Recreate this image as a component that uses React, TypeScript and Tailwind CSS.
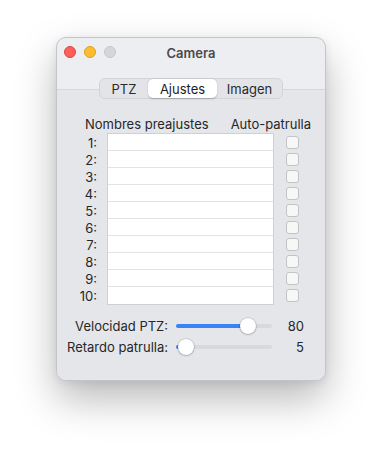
const presets = Array.from({ length: 10 }, (_, i) => i + 1);

function TrafficLights() {
  return (
    <div className="absolute left-[7px] top-[8px] flex gap-[8px]">
      <span className="h-[12px] w-[12px] rounded-full border border-[#e0443e] bg-[#fe5f57]" />
      <span className="h-[12px] w-[12px] rounded-full border border-[#dea123] bg-[#febc2e]" />
      <span className="h-[12px] w-[12px] rounded-full border border-[#c6c6c9] bg-[#d5d6d9]" />
    </div>
  );
}

function Tabs() {
  const tabs = ["PTZ", "Ajustes", "Imagen"];
  const widths = ["w-[48px]", "w-[69px]", "w-[65px]"];
  return (
    <div className="relative z-10 mx-auto flex h-[21px] items-center rounded-[6px] border border-[#d3d4d8] bg-[#e3e4e8] px-[0px]">
      {tabs.map((t, i) => (
        <div
          key={t}
          className={
            i === 1
              ? `${widths[i]} flex h-[19px] items-center justify-center rounded-[5px] bg-white text-[#1d1d1f] shadow-[0_0.5px_1.5px_rgba(0,0,0,0.25)]`
              : `${widths[i]} flex h-[19px] items-center justify-center text-[#2a2a2c]`
          }
        >
          {t}
        </div>
      ))}
    </div>
  );
}

function Slider({ label, value, pos }: { label: string; value: number; pos: "a" | "b" }) {
  return (
    <div className="flex h-[21px] items-center">
      <div className="w-[111px] text-right">{label}</div>
      <div className="relative ml-[8px] h-[16px] w-[96px]">
        <div className="absolute left-0 right-0 top-[6px] h-[4px] rounded-full bg-[#d8d9dd]" />
        <div
          className={
            pos === "a"
              ? "absolute left-0 top-[6px] h-[4px] w-[72px] rounded-full bg-[#3a82f7]"
              : "absolute left-0 top-[6px] h-[4px] w-[10px] rounded-full bg-[#3a82f7]"
          }
        />
        <div
          className={
            pos === "a"
              ? "absolute left-[64px] top-0 h-[16px] w-[16px] rounded-full bg-white shadow-[0_0.5px_2px_rgba(0,0,0,0.35),0_0_0_0.5px_rgba(0,0,0,0.12)]"
              : "absolute left-[2px] top-0 h-[16px] w-[16px] rounded-full bg-white shadow-[0_0.5px_2px_rgba(0,0,0,0.35),0_0_0_0.5px_rgba(0,0,0,0.12)]"
          }
        />
      </div>
      <div className="w-[32px] text-right">{value}</div>
    </div>
  );
}

export default function App() {
  return (
    <div className="min-h-[455px] bg-white pl-[56px] pt-[37px] font-['Inter','Liberation_Sans',sans-serif] text-[13px] leading-[16px] text-[#262628]">
      <div className="flex h-[344px] w-[270px] flex-col overflow-hidden rounded-[10px] border border-[#c4c5c9] bg-[#eceef1] shadow-[0_18px_40px_rgba(0,0,0,0.28),0_2px_8px_rgba(0,0,0,0.08)]">
        <div className="relative flex h-[29px] shrink-0 items-center justify-center">
          <TrafficLights />
          <span className="font-semibold text-[#4a4a4d]">Camera</span>
        </div>

        <div className="mt-[11px] flex flex-1 flex-col">
          <Tabs />
          <div className="-mt-[10px] flex-1 border-t border-[#d6d7db] bg-[#e5e6ea] pt-[26px]">
            <div className="ml-[19px]">
              <div className="flex w-[235px] justify-between pl-[9px]">
                <span>Nombres preajustes</span>
                <span>Auto-patrulla</span>
              </div>
              <div className="mt-[1px] flex">
                <div className="w-[21px] pt-[1px] text-right">
                  {presets.map((n) => (
                    <div key={n} className="flex h-[17px] items-center justify-end">
                      {n}:
                    </div>
                  ))}
                </div>
                <div className="ml-[10px] w-[167px] border border-[#cfd0d3] bg-white">
                  {presets.map((n) => (
                    <div
                      key={n}
                      className="h-[17px] border-b border-[#e3e3e6] last:border-b-0"
                    />
                  ))}
                </div>
                <div className="ml-[12px] pt-[1px]">
                  {presets.map((n) => (
                    <div key={n} className="flex h-[17px] items-center">
                      <span className="h-[13px] w-[13px] rounded-[3px] border border-[#c2c3c7] bg-[#f7f7f8]" />
                    </div>
                  ))}
                </div>
              </div>
            </div>

            <div className="mt-[10px]">
              <Slider label="Velocidad PTZ:" value={80} pos="a" />
              <Slider label="Retardo patrulla:" value={5} pos="b" />
            </div>
          </div>
        </div>
      </div>
    </div>
  );
}
